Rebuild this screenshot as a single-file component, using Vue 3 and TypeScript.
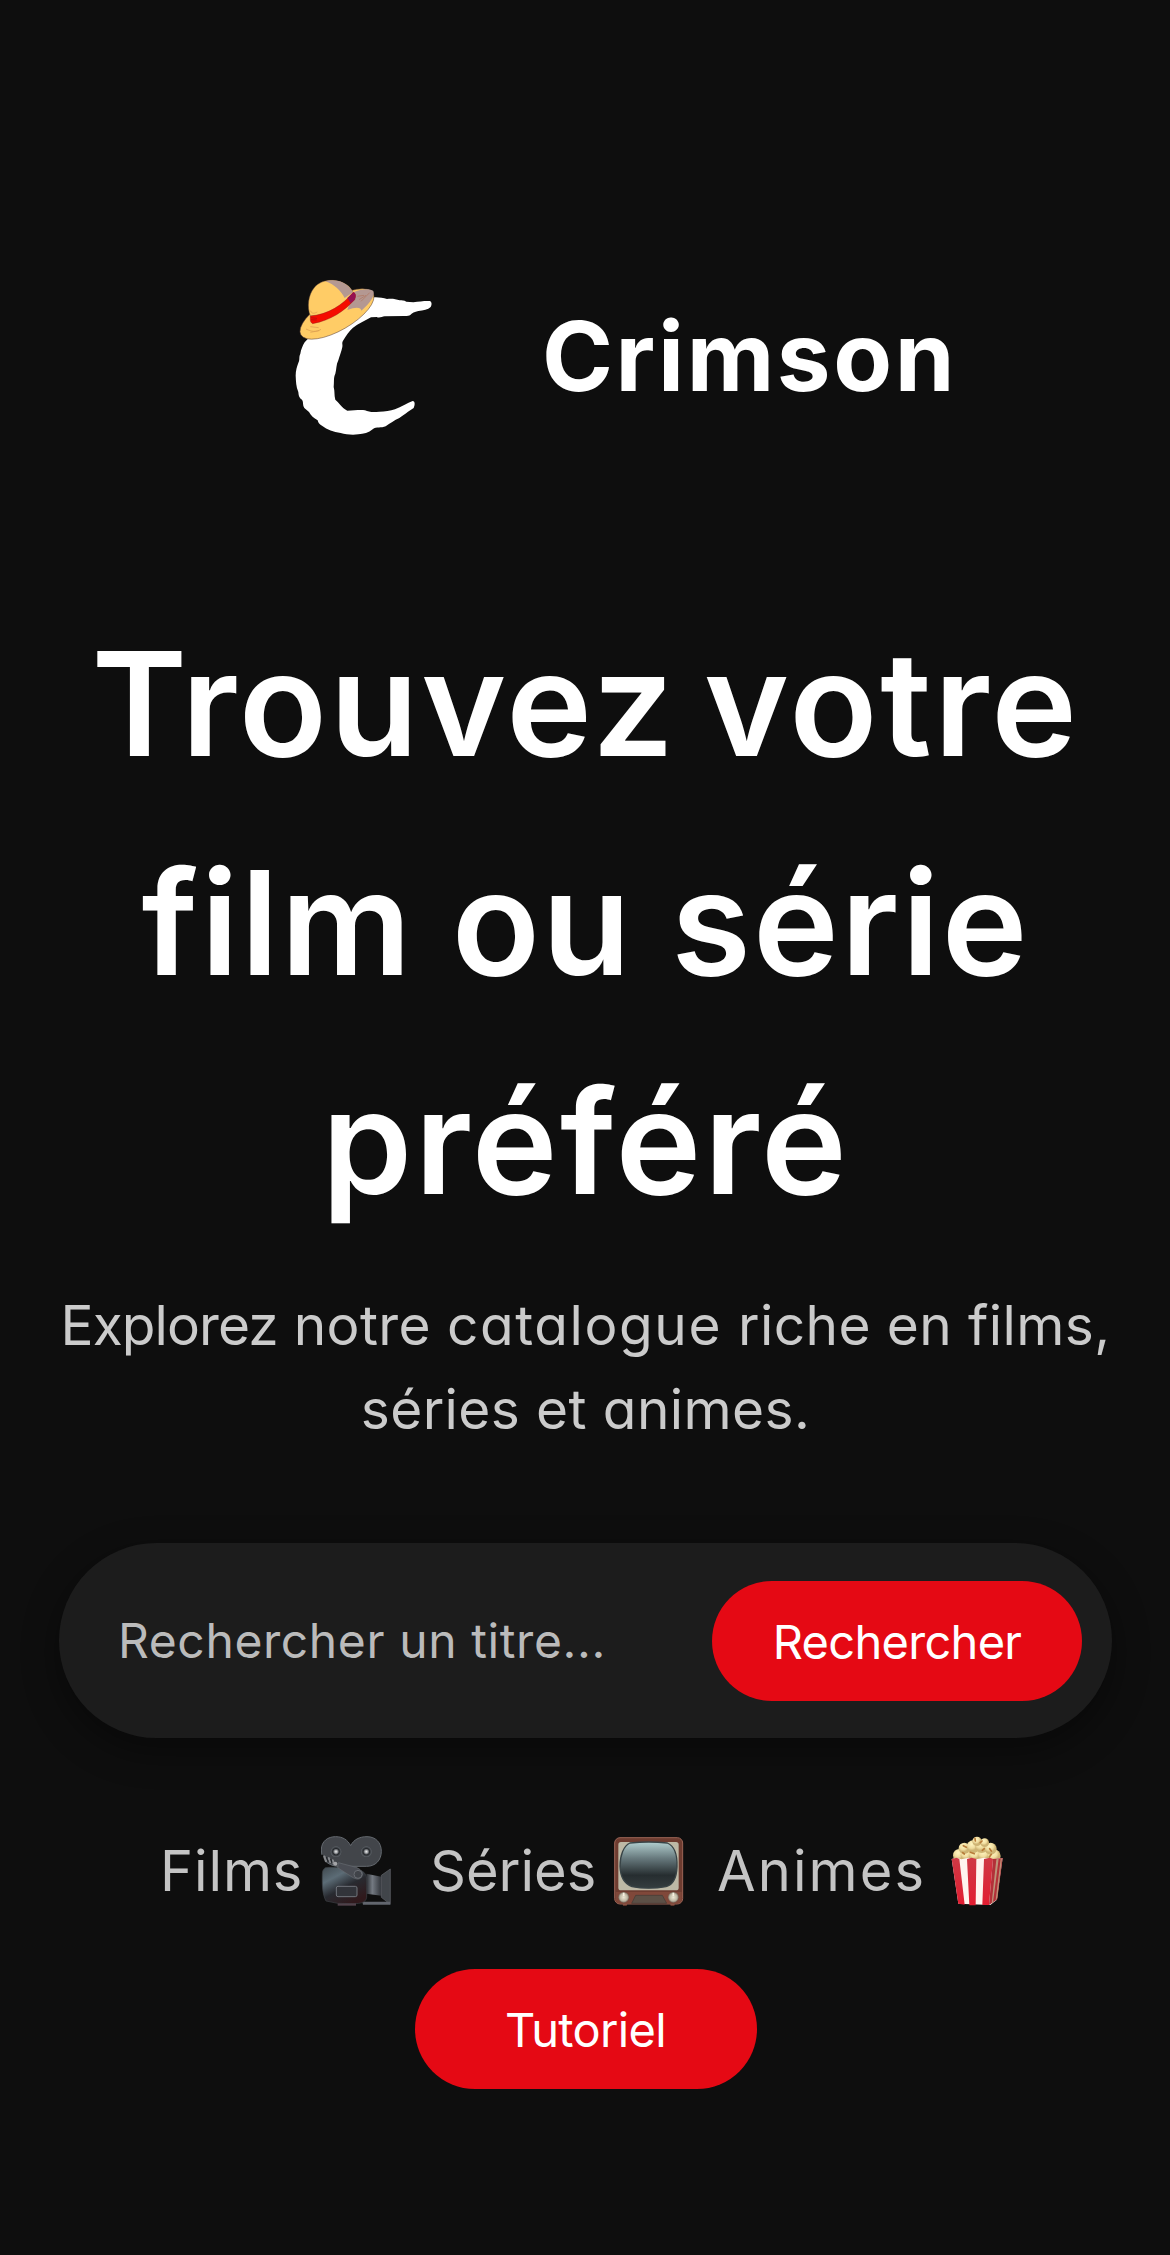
<script setup lang="ts">
import { ref } from 'vue'

const query = ref('')
const titleLines: string[] = ['Trouvez votre', 'film ou série', 'préféré']
</script>

<template>
  <main class="page">
    <header class="brand">
      <svg class="logo" viewBox="0 0 510 546" aria-hidden="true">
        <path fill="#fff" d="M282 97C296 96 309 99 321 102C335 100 347 102 359 106C366 106 372 106 379 110L400 112C419 109 436 107 450 108C456 111 456 120 452 126C444 134 430 137 415 138C404 140 396 144 390 151C384 154 379 153 371 153L314 154C306 155 298 160 290 156L273 157C255 167 235 176 219 188C207 198 199 211 190 226C184 235 189 238 187 246C184 261 179 272 175 286C168 299 170 313 166 326C160 337 163 352 161 366C165 379 162 390 166 404C177 413 185 428 202 437C222 437 239 434 255 436C267 442 282 442 298 440C315 440 331 438 345 433C364 426 382 414 398 408C406 409 405 420 401 429L384 440C375 447 366 452 358 459C343 466 330 475 317 484C304 490 289 484 278 493C266 503 251 507 235 508C216 511 198 508 182 504C160 500 142 494 126 482C117 477 115 474 113 466C101 458 93 453 87 441L73 429C67 419 71 411 66 404C57 398 56 392 55 381C48 365 48 349 47 332C47 317 51 304 56 291C60 282 56 276 61 266C63 254 68 242 74 232L88 217L200 145Z"/>
        <ellipse cx="171" cy="147" rx="125" ry="49" transform="rotate(-30 171 147)" fill="#fc6" stroke="#604334" stroke-width="1.5"/>
        <path fill="#b49892" d="M220 82C244 71 270 70 280 78C286 91 271 114 244 137C243 128 231 124 202 135Z"/>
        <path fill="#fc6" stroke="#604334" stroke-width="1.3" d="M91 153C80 126 85 89 102 69C115 52 136 45 159 46C190 48 211 63 219 82L210 108C171 138 132 151 91 153Z"/>
        <path fill="#b49892" d="M136 49C169 39 205 54 219 82L194 99C183 77 163 58 136 49Z"/>
        <path fill="#f50c00" stroke="#702523" stroke-width="1" d="M91 153C146 148 186 121 220 82C228 85 228 94 224 104C191 139 155 165 98 176C89 171 91 163 91 153Z"/>
        <path fill="#951252" d="M202 99L220 82C228 85 228 94 224 104L212 115Z"/>
        <path fill="none" stroke="#d99b50" stroke-width="2" d="M91 137C97 149 105 144 112 141M78 192C94 200 108 202 123 193M91 185L116 188M91 202L118 197"/>
        <path fill="none" stroke="#b1745d" stroke-width="2" d="M232 94L252 91M237 104L258 91M243 109L269 83"/>
        <path fill="none" stroke="#a90a13" stroke-width="2" d="M92 158L111 160M93 164L110 165"/>
      </svg>
      <span class="brand-name">Crimson</span>
    </header>

    <h1 class="title">
      <span v-for="(line, i) in titleLines" :key="line" :class="['title-line', `title-line-${i + 1}`]">{{ line }}</span>
    </h1>

    <p class="intro">
      <span class="intro-line"><span class="tight">Explorez</span> notre <span class="loose">catalogue</span> riche en films,</span>
      <span class="intro-line">séries et animes.</span>
    </p>

    <form class="search" @submit.prevent>
      <input v-model="query" class="search-input" type="text" placeholder="Rechercher un titre..." aria-label="Rechercher un titre">
      <button class="button search-button" type="submit">Rechercher</button>
    </form>

    <nav class="categories">
      <a class="category films"><span>Films</span>
        <svg width="70" height="72" viewBox="0 0 210 216" aria-hidden="true">
          <defs>
            <linearGradient id="cameraBody" x1="0" y1="0" x2=".65" y2="1"><stop stop-color="#40494f"/><stop offset=".32" stop-color="#5c6c76"/><stop offset=".62" stop-color="#282a30"/><stop offset="1" stop-color="#30191c"/></linearGradient>
            <linearGradient id="cameraLens"><stop stop-color="#292c31"/><stop offset=".4" stop-color="#747a82"/><stop offset="1" stop-color="#31343a"/></linearGradient>
            <radialGradient id="reelHub"><stop stop-color="#eee"/><stop offset=".3" stop-color="#9a9da1"/><stop offset=".6" stop-color="#24272b"/><stop offset="1" stop-color="#5d6268"/></radialGradient>
          </defs>
          <path d="M1 42C1 15 21 2 44 2C66 2 80 12 89 29C98 11 115 2 138 2C164 2 181 20 181 46C181 73 163 91 137 91H69C28 95 1 76 1 42Z" fill="#42454a" stroke="#656a70" stroke-width="3"/>
          <circle cx="45" cy="47" r="16" fill="url(#reelHub)"/><circle cx="136" cy="47" r="16" fill="url(#reelHub)"/>
          <path d="M136 113L181 122V179L136 173Z" fill="url(#cameraLens)"/>
          <path d="M181 118L208 99V205L181 184Z" fill="#41454a" stroke="#62656b" stroke-width="2"/>
          <path d="M124 197H207V206H126Z" fill="#62666e"/>
          <path d="M13 95C43 91 81 97 116 103C130 106 137 116 137 132V184C133 207 106 203 50 202L15 195C4 174 3 148 4 113C4 103 8 99 13 95Z" fill="url(#cameraBody)" stroke="#3d4146" stroke-width="2"/>
          <path d="M52 80L105 94C125 101 129 115 119 126C112 133 98 127 90 121L50 95Z" fill="#4a4d54" stroke="#676b71" stroke-width="2"/>
          <circle cx="111" cy="115" r="12" fill="#404349" stroke="#686c72" stroke-width="3"/>
          <path d="M2 57L12 78" stroke="#0e0e0e" stroke-width="7"/>
          <path d="M10 62L15 75M23 67L28 78M35 73L38 82" stroke="#85878b" stroke-width="7" stroke-linecap="round"/>
          <path d="M16 63L22 77M29 69L33 80" stroke="#24272b" stroke-width="4"/>
          <circle cx="43" cy="83" r="6" fill="#a4a5a8"/>
          <rect x="46" y="151" width="62" height="31" rx="5" fill="#32343a" stroke="#70747b" stroke-width="3"/>
          <path d="M50 202H105V209H50Z" fill="#51414a"/>
        </svg>
      </a>
      <a class="category series"><span>Séries</span>
        <svg width="70" height="72" viewBox="0 0 210 216" aria-hidden="true">
          <defs>
            <linearGradient id="screen" x1="0" y1="0" x2="0" y2="1"><stop stop-color="#b2cfcf"/><stop offset=".35" stop-color="#687a7e"/><stop offset=".72" stop-color="#262d30"/><stop offset="1" stop-color="#343d3f"/></linearGradient>
            <radialGradient id="knob"><stop stop-color="#eee8d5"/><stop offset=".7" stop-color="#beb7a3"/><stop offset="1" stop-color="#776c60"/></radialGradient>
          </defs>
          <path d="M25 198H42L38 209H27ZM167 198H184L181 209H170Z" fill="#754032"/>
          <rect x="2" y="5" width="204" height="199" rx="16" fill="#6e3c30" stroke="#9c6456" stroke-width="3"/>
          <rect x="13" y="18" width="181" height="145" rx="8" fill="#bdb9a6"/>
          <path d="M48 21Q104 15 160 21C183 31 190 62 189 92C188 124 177 146 156 152Q103 161 54 152C31 144 19 121 18 91C18 58 29 29 48 21Z" fill="url(#screen)" stroke="#384346" stroke-width="4"/>
          <path d="M5 168H203V194Q198 203 187 203H19Q7 201 5 192Z" fill="#80483a"/>
          <path d="M65 178H145L158 202H53Z" fill="#5c5046" stroke="#413a35" stroke-width="2"/>
          <circle cx="29" cy="184" r="16" fill="url(#knob)"/><circle cx="178" cy="184" r="16" fill="url(#knob)"/>
          <path d="M29 170V180M178 170V180" stroke="#f8f2e2" stroke-width="5"/>
        </svg>
      </a>
      <a class="category animes"><span>Animes</span>
        <svg width="54" height="72" viewBox="0 0 162 216" aria-hidden="true">
          <defs>
            <radialGradient id="corn" cx=".4" cy=".3"><stop stop-color="#fff5c0"/><stop offset=".65" stop-color="#f0dda0"/><stop offset="1" stop-color="#ceb474"/></radialGradient>
            <linearGradient id="redStripe" x1="0" y1="0" x2="0" y2="1"><stop stop-color="#ce3945"/><stop offset="1" stop-color="#e21d31"/></linearGradient>
          </defs>
          <g fill="url(#corn)"><circle cx="25" cy="58" r="19"/><circle cx="47" cy="58" r="18"/><circle cx="73" cy="57" r="20"/><circle cx="100" cy="57" r="20"/><circle cx="129" cy="60" r="20"/><circle cx="40" cy="37" r="17"/><circle cx="66" cy="32" r="19"/><circle cx="92" cy="31" r="20"/><circle cx="119" cy="38" r="18"/><circle cx="78" cy="16" r="14"/><circle cx="101" cy="20" r="13"/></g>
          <path d="M37 29L46 34M72 7L73 15M93 15L88 20M58 49L70 53M35 50L40 54M94 43L100 38M121 45L116 38M115 63L121 55" stroke="#b77b39" stroke-width="5" stroke-linecap="round"/>
          <path d="M2 69L17 65L31 70L53 65L76 70L99 65L126 69L155 66L137 192L118 207L22 203Z" fill="#fff4ef"/>
          <path d="M2 69L17 65L25 69L41 206L22 203ZM48 69L62 65L76 69L74 208H55ZM99 69L117 65L126 69L114 207H94Z" fill="url(#redStripe)"/>
          <path d="M126 69L155 66L139 190L114 207Z" fill="#b33038"/>
          <path d="M136 70L143 68L126 199L122 202ZM149 68L153 67L139 186L134 193Z" fill="#bd9278"/>
        </svg>
      </a>
    </nav>

    <button class="button tutorial" type="button">Tutoriel</button>
  </main>
</template>

<style>
body { background: #0e0e0e; }
</style>

<style scoped>
.page {
  display: flex;
  flex-direction: column;
  align-items: center;
  box-sizing: border-box;
  width: 1170px;
  height: 2255px;
  padding: 265px 58px 0 59px;
  background: #0e0e0e;
  color: #fff;
  font-family: Inter, "Open Sans", sans-serif;
  font-feature-settings: "cv11";
  overflow: hidden;
}

.brand {
  display: flex;
  align-items: center;
  align-self: flex-start;
  margin-left: 221px;
}

.logo { width: 170px; height: 182px; }

.brand-name {
  margin-left: 92px;
  font-size: 96px;
  line-height: 144px;
  font-weight: 650;
  letter-spacing: 2.6px;
  white-space: nowrap;
}

.title {
  margin: 147px 0 0;
  font-size: 145px;
  line-height: 219px;
  font-weight: 640;
  text-align: center;
}

.title-line, .intro-line { display: block; white-space: nowrap; }
.title-line-1 { letter-spacing: 2.7px; word-spacing: -12px; }
.title-line-2 { letter-spacing: 2px; }
.title-line-3 { letter-spacing: 2.6px; }

.intro {
  margin: 32px 0 0;
  color: #cbcbcb;
  font-size: 55px;
  line-height: 84px;
  letter-spacing: .4px;
  text-align: center;
}

.tight { letter-spacing: -.9px; }
.loose { letter-spacing: 1.6px; }

.search {
  display: flex;
  align-items: center;
  box-sizing: border-box;
  width: 1053px;
  height: 195px;
  margin-top: 92px;
  padding: 0 30px 0 59px;
  border-radius: 98px;
  background: #1c1c1c;
  box-shadow: 0 12px 36px rgba(0, 0, 0, .4);
}

.search-input {
  flex: 1;
  min-width: 0;
  height: 120px;
  padding: 0;
  border: 0;
  outline: 0;
  background: transparent;
  color: #fff;
  font: inherit;
  font-feature-settings: inherit;
  font-size: 48px;
  letter-spacing: .6px;
}

.search-input::placeholder { color: #bbb; opacity: 1; }

.button {
  flex: none;
  height: 120px;
  padding: 2px 0 0;
  border: 0;
  border-radius: 60px;
  background: #e50914;
  color: #fff;
  font-family: Inter, sans-serif;
  font-size: 47px;
  letter-spacing: -.7px;
}

.search-button { width: 370px; }

.categories {
  display: flex;
  align-self: flex-start;
  height: 72px;
  margin: 98px 0 0 101px;
  color: #c4c4c4;
  font-size: 56px;
  line-height: 70px;
}

.category { display: flex; justify-content: space-between; }
.films { width: 231px; letter-spacing: .9px; }
.series { width: 254px; margin-left: 39px; }
.animes { width: 288px; margin-left: 33px; letter-spacing: 2.1px; }
.tutorial { width: 342px; margin-top: 61px; padding-top: 0; }
</style>
